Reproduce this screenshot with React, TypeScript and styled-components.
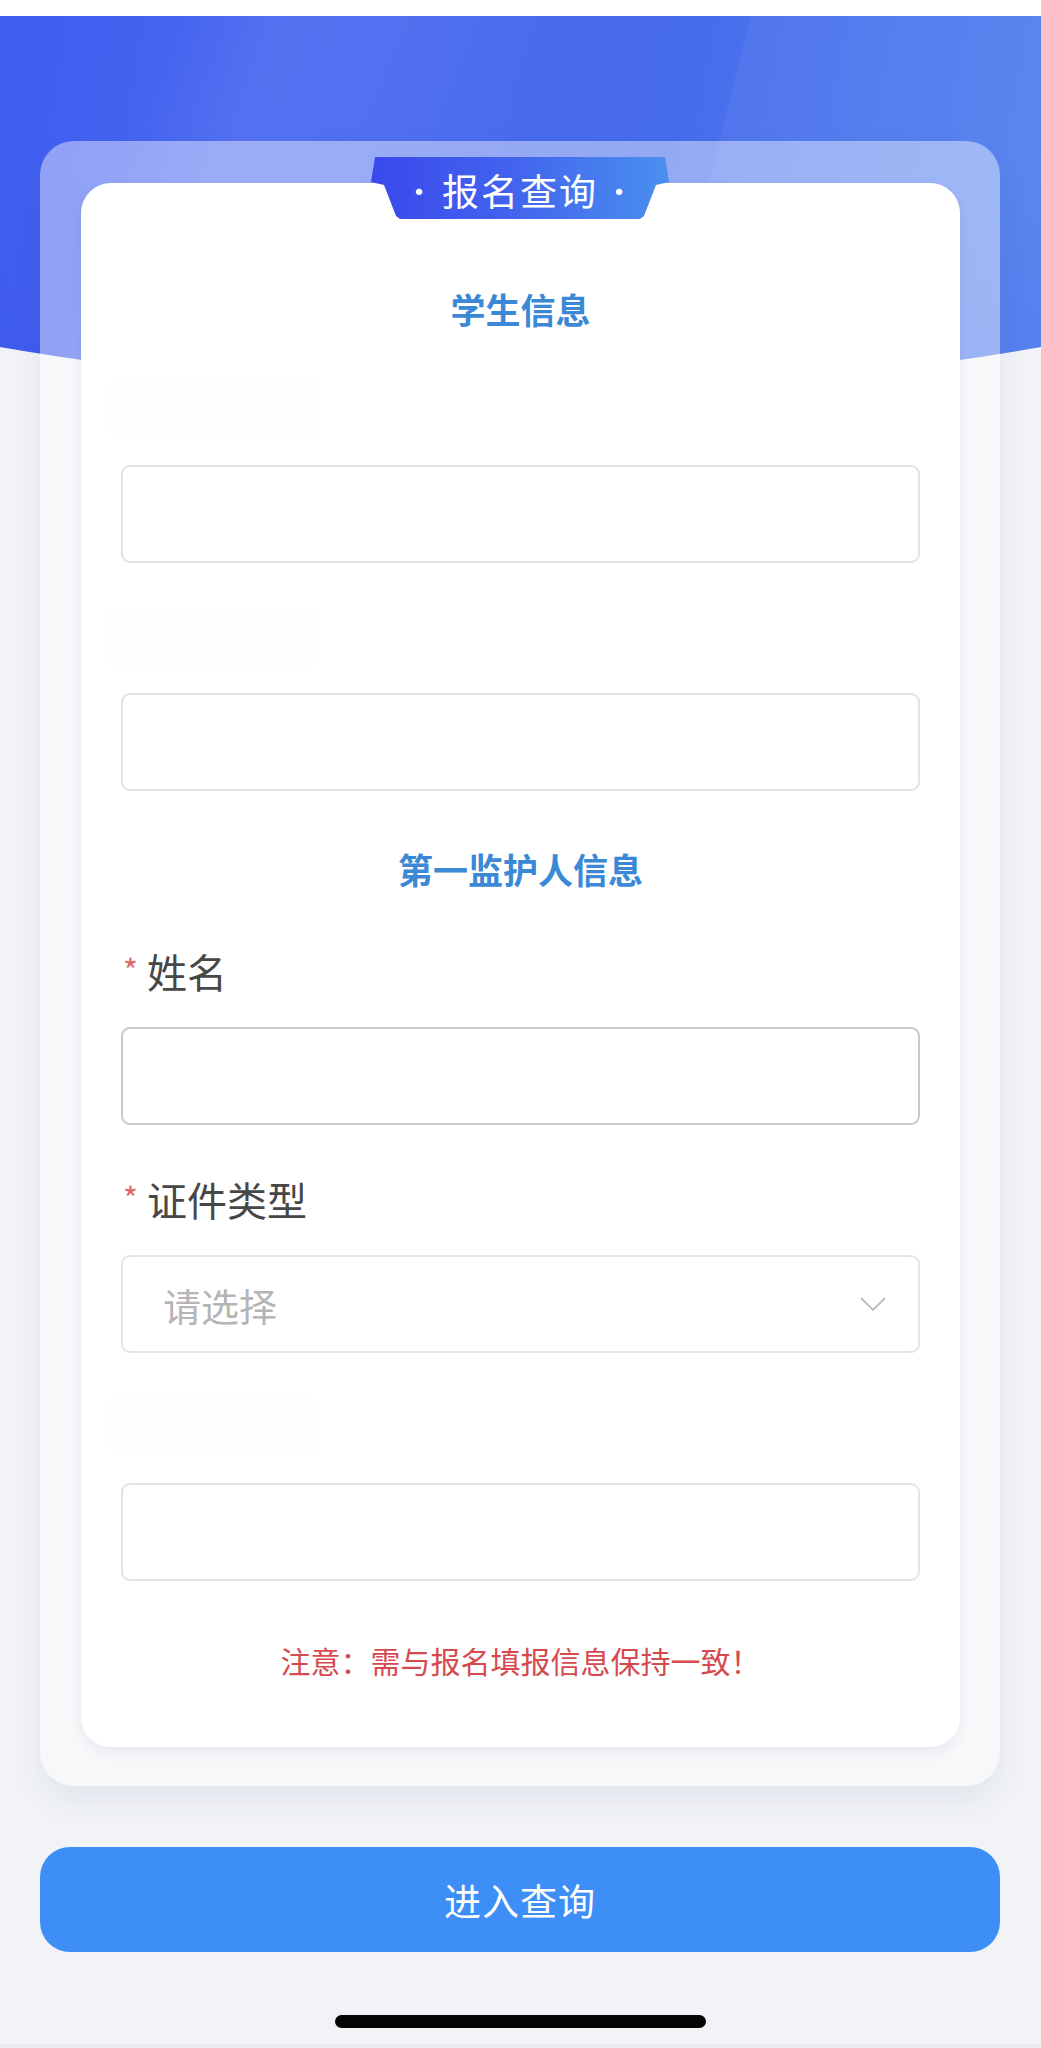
import React from "react";
import styled, { createGlobalStyle } from "styled-components";

const GlobalStyle = createGlobalStyle`
  html, body {
    margin: 0;
    padding: 0;
    background: #f1f3f7;
  }
  * {
    box-sizing: border-box;
  }
  body {
    font-family: "Noto Sans CJK SC", "Noto Sans", "Liberation Sans", sans-serif;
  }
`;

const Page = styled.div`
  width: 1041px;
  min-height: 2048px;
  display: flex;
  flex-direction: column;
  background: #f1f3f7;
`;

const StatusStrip = styled.div`
  height: 16px;
  background: #ffffff;
`;

const Hero = styled.div`
  height: 373px;
  background:
    linear-gradient(104deg, transparent 66%, rgba(255, 255, 255, 0.05) 66.4%),
    linear-gradient(112deg, transparent 14%, rgba(255, 255, 255, 0.07) 24%, rgba(255, 255, 255, 0.02) 42%, transparent 48%),
    linear-gradient(180deg, rgba(20, 30, 200, 0) 40%, rgba(30, 40, 220, 0.1) 100%),
    linear-gradient(100deg, #405ef0 0%, #4a6aef 35%, #476cec 62%, #5282ee 100%);
  clip-path: ellipse(900px 228px at 50% 145px);
`;

const Main = styled.main`
  margin-top: -248px;
  padding: 0 41px 0 40px;
  display: flex;
  flex-direction: column;
`;

const OuterCard = styled.section`
  position: relative;
  padding: 42px 40px 39px 41px;
  border-radius: 34px;
  background: rgba(255, 255, 255, 0.42);
  box-shadow: 0 14px 30px rgba(40, 60, 110, 0.07);
`;

const Tab = styled.div`
  position: absolute;
  top: 16px;
  left: 50%;
  transform: translateX(-50%);
  width: 298px;
  height: 62px;
  display: flex;
  align-items: center;
  justify-content: center;
  padding-top: 4px;
  background: linear-gradient(90deg, #3a49ec 0%, #4262ee 45%, #4a90ef 100%);
  clip-path: polygon(4px 0, 294px 0, 298px 25px, 285px 28px, 273px 59px, 269px 62px, 29px 62px, 25px 59px, 13px 28px, 0 25px);
  color: #ffffff;
  font-size: 37px;
  letter-spacing: 2px;
  z-index: 2;
`;

const Dot = styled.span`
  font-size: 30px;
  margin: 0 6px;
`;

const InnerCard = styled.div`
  background: #ffffff;
  border-radius: 30px;
  padding: 101px 40px 67px 40px;
  display: flex;
  flex-direction: column;
  box-shadow: 0 6px 14px rgba(30, 40, 70, 0.06);
`;

const SectionTitle = styled.h2<{ $gapBelow: number }>`
  margin: 0 0 ${(p) => p.$gapBelow}px 0;
  height: 50px;
  line-height: 50px;
  text-align: center;
  font-size: 35px;
  font-weight: 700;
  color: #3b88d6;
`;

const Fields = styled.div<{ $gapBelow: number }>`
  display: flex;
  flex-direction: column;
  gap: 46px;
  margin-bottom: ${(p) => p.$gapBelow}px;
`;

const Field = styled.div`
  display: flex;
  flex-direction: column;
  gap: 28px;
`;

const Label = styled.label`
  height: 56px;
  line-height: 56px;
  display: flex;
  align-items: center;
  font-size: 40px;
  color: #474747;
`;

const Star = styled.span`
  color: #e06868;
  font-size: 32px;
  margin: -4px 9px 0 2px;
`;

const HiddenLabel = styled.div`
  height: 56px;
  width: 205px;
  margin-left: -10px;
  background: #fdfdfb;
  border-radius: 6px;
  filter: blur(2px);
`;

const Input = styled.input<{ $focused?: boolean }>`
  height: 98px;
  width: 100%;
  border: 2px solid ${(p) => (p.$focused ? "#c9c9c9" : "#e3e3e3")};
  border-radius: 9px;
  background: #ffffff;
  padding: 0 40px;
  font-family: inherit;
  font-size: 36px;
  outline: none;
`;

const Select = styled.div`
  height: 98px;
  border: 2px solid #e6e6e6;
  border-radius: 9px;
  padding: 0 32px 0 40px;
  display: flex;
  align-items: center;
  justify-content: space-between;
`;

const Placeholder = styled.span`
  font-size: 38px;
  color: #b5b5b5;
`;

const Notice = styled.p`
  margin: 0;
  height: 40px;
  line-height: 40px;
  text-align: center;
  font-size: 30px;
  color: #d44a4e;
`;

const SubmitButton = styled.button`
  margin-top: 61px;
  height: 105px;
  border: none;
  border-radius: 30px;
  background: #3e8ef7;
  color: #ffffff;
  font-family: inherit;
  font-size: 37px;
  letter-spacing: 1px;
`;

const HomeBar = styled.div`
  margin: 63px auto 0;
  width: 371px;
  height: 13px;
  border-radius: 7px;
  background: #050505;
`;

const BottomEdge = styled.div`
  margin-top: 16px;
  height: 4px;
  background: #eaebee;
`;

const Chevron = () => (
  <svg width="26" height="15" viewBox="0 0 26 15">
    <polyline points="1,1 13,13 25,1" fill="none" stroke="#bcbcbc" strokeWidth="1.8" />
  </svg>
);

const App = () => {
  return (
    <Page>
      <GlobalStyle />
      <StatusStrip />
      <Hero />
      <Main>
        <OuterCard>
          <Tab>
            <Dot>·</Dot>报名查询<Dot>·</Dot>
          </Tab>
          <InnerCard>
            <SectionTitle $gapBelow={47}>学生信息</SectionTitle>
            <Fields $gapBelow={53}>
              <Field>
                <HiddenLabel />
                <Input />
              </Field>
              <Field>
                <HiddenLabel />
                <Input />
              </Field>
            </Fields>
            <SectionTitle $gapBelow={49}>第一监护人信息</SectionTitle>
            <Fields $gapBelow={59}>
              <Field>
                <Label>
                  <Star>*</Star>姓名
                </Label>
                <Input $focused />
              </Field>
              <Field>
                <Label>
                  <Star>*</Star>证件类型
                </Label>
                <Select>
                  <Placeholder>请选择</Placeholder>
                  <Chevron />
                </Select>
              </Field>
              <Field>
                <HiddenLabel />
                <Input />
              </Field>
            </Fields>
            <Notice>注意：需与报名填报信息保持一致！</Notice>
          </InnerCard>
        </OuterCard>
        <SubmitButton>进入查询</SubmitButton>
        <HomeBar />
      </Main>
      <BottomEdge />
    </Page>
  );
};

export default App;
